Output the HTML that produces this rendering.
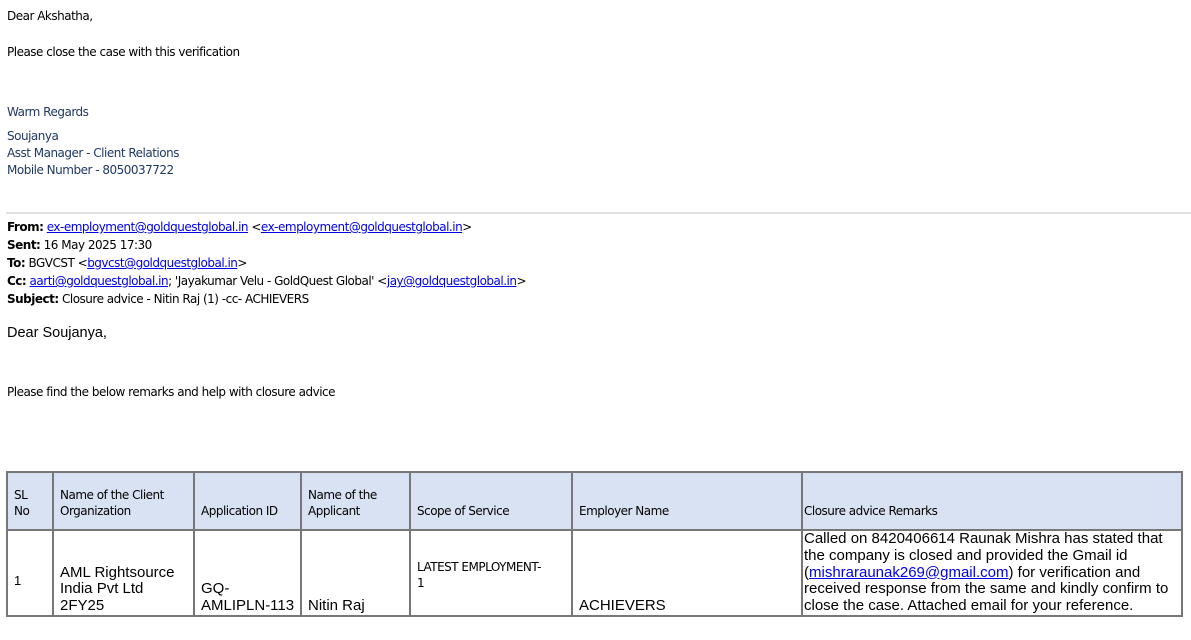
<!DOCTYPE html>
<html><head><meta charset="utf-8"><style>
body{margin:0;width:1191px;height:640px;background:#fff;font-family:"DejaVu Sans","Liberation Sans",sans-serif;font-size:12px;color:#000;position:relative;overflow:hidden}
.t{position:absolute;left:7px;white-space:nowrap;line-height:16px;letter-spacing:-0.5px}
.b{color:#1f3864}
a{color:#0000ee;text-decoration:underline}
table{position:absolute;left:6px;top:471px;border-collapse:collapse;table-layout:fixed}
td{border:2px solid #777;padding:0 0 0 6px;vertical-align:bottom;overflow:hidden}
tr.h td{background:#d9e2f3;height:46px;font-size:12px;line-height:16px;padding-bottom:10px;letter-spacing:-0.5px}
tr.r td{height:84px;font-family:"Liberation Sans",Arial,sans-serif;font-size:15px;line-height:16.8px;padding-bottom:0}
</style></head><body>
<div class="t" style="top:8px">Dear Akshatha,</div>
<div class="t" style="top:44px">Please close the case with this verification</div>
<div class="t b" style="top:104px">Warm Regards</div>
<div class="t b" style="top:128px">Soujanya</div>
<div class="t b" style="top:145px">Asst Manager - Client Relations</div>
<div class="t b" style="top:162px">Mobile Number - 8050037722</div>
<div style="position:absolute;left:6px;right:0;top:212px;border-top:2px solid #e1e1e1"></div>
<div class="t" style="top:219px"><b>From:</b> <a>ex-employment@goldquestglobal.in</a> &lt;<a>ex-employment@goldquestglobal.in</a>&gt;</div>
<div class="t" style="top:237px"><b>Sent:</b> 16 May 2025 17:30</div>
<div class="t" style="top:255px"><b>To:</b> BGVCST &lt;<a>bgvcst@goldquestglobal.in</a>&gt;</div>
<div class="t" style="top:273px"><b>Cc:</b> <a>aarti@goldquestglobal.in</a>; 'Jayakumar Velu - GoldQuest Global' &lt;<a>jay@goldquestglobal.in</a>&gt;</div>
<div class="t" style="top:291px"><b>Subject:</b> Closure advice - Nitin Raj (1) -cc- ACHIEVERS</div>
<div class="t" style="top:325px;font-family:'Liberation Sans',Arial,sans-serif;font-size:14.5px;letter-spacing:0">Dear Soujanya,</div>
<div class="t" style="top:384px">Please find the below remarks and help with closure advice</div>
<table>
<colgroup><col style="width:46px"><col style="width:141px"><col style="width:107px"><col style="width:109px"><col style="width:162px"><col style="width:230px"><col style="width:380px"></colgroup>
<tr class="h"><td>SL<br>No</td><td>Name of the Client<br>Organization</td><td>Application ID</td><td>Name of the<br>Applicant</td><td>Scope of Service</td><td>Employer Name</td><td style="padding-left:1px">Closure advice Remarks</td></tr>
<tr class="r"><td style="vertical-align:middle;font-size:13px"><span style="position:relative;top:8px">1</span></td><td>AML Rightsource<br>India Pvt Ltd<br>2FY25</td><td>GQ-<br>AMLIPLN-113</td><td>Nitin Raj</td><td style="vertical-align:middle;font-family:'DejaVu Sans',sans-serif;font-size:12px;line-height:16px;letter-spacing:-0.5px"><div style="position:relative;top:2px">LATEST EMPLOYMENT-<br>1</div></td><td>ACHIEVERS</td><td style="padding-left:1px;white-space:nowrap">Called on 8420406614 Raunak Mishra has stated that<br>the company is closed and provided the Gmail id<br>(<a>mishraraunak269@gmail.com</a>) for verification and<br>received response from the same and kindly confirm to<br>close the case. Attached email for your reference.</td></tr>
</table>
</body></html>
